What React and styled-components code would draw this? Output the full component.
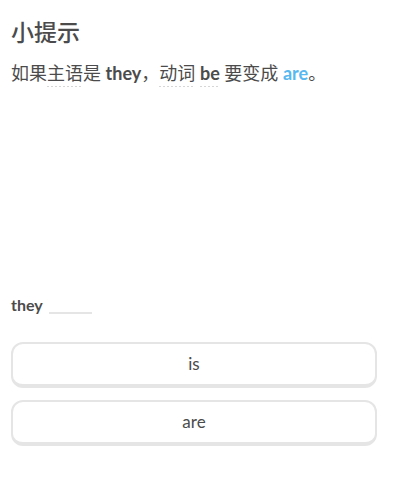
import React from "react";
import styled, { createGlobalStyle } from "styled-components";

const GlobalStyle = createGlobalStyle`
  body {
    margin: 0;
    background: #fff;
    font-family: "Lato", "Noto Sans CJK SC", sans-serif;
    color: #4b4b4b;
  }
`;

const Page = styled.div`
  height: 100vh;
  box-sizing: border-box;
  display: flex;
  flex-direction: column;
  padding: 0 31px 39px 11px;
`;

const Title = styled.h1`
  margin: 17px 0 0;
  font-size: 23px;
  font-weight: 500;
  line-height: 30px;
  color: #4b4b4b;
`;

const Hint = styled.p`
  margin: 13px 0 0;
  font-size: 18px;
  line-height: 26px;
  color: #4b4b4b;
`;

const Dotted = styled.span`
  background-image: linear-gradient(to right, #d6d6d6 50%, transparent 50%);
  background-size: 4px 1px;
  background-repeat: repeat-x;
  background-position: 0 100%;
  padding-bottom: 3px;
`;

const Strong = styled.b`
  font-weight: 700;
  color: ${(p) => (p.$accent ? "#58b8f0" : "#4b4b4b")};
`;

const Bottom = styled.div`
  margin-top: auto;
  display: flex;
  flex-direction: column;
`;

const Sentence = styled.div`
  display: flex;
  align-items: flex-end;
  gap: 6px;
  font-size: 16px;
  font-weight: 700;
  line-height: 20px;
  color: #4b4b4b;
  margin-bottom: 27px;
`;

const Blank = styled.span`
  display: inline-block;
  width: 43px;
  height: 2px;
  background: #e5e5e5;
  margin-bottom: 1px;
`;

const Options = styled.div`
  display: flex;
  flex-direction: column;
  gap: 12px;
`;

const Option = styled.button`
  height: 46px;
  box-sizing: border-box;
  width: 100%;
  background: #fff;
  border: 2px solid #e5e5e5;
  border-bottom-width: 4px;
  border-radius: 12px;
  font-family: "Lato", sans-serif;
  font-size: 17px;
  color: #4b4b4b;
  padding: 0 0 1px;
  cursor: pointer;
`;

export default function App() {
  return (
    <>
      <GlobalStyle />
      <Page>
        <Title>小提示</Title>
        <Hint>
          如果<Dotted>主语</Dotted>是 <Strong>they</Strong>，<Dotted>动词</Dotted>{" "}
          <Dotted>
            <Strong>be</Strong>
          </Dotted>{" "}
          要变成 <Strong $accent>are</Strong>。
        </Hint>
        <Bottom>
          <Sentence>
            they <Blank />
          </Sentence>
          <Options>
            <Option>is</Option>
            <Option>are</Option>
          </Options>
        </Bottom>
      </Page>
    </>
  );
}
